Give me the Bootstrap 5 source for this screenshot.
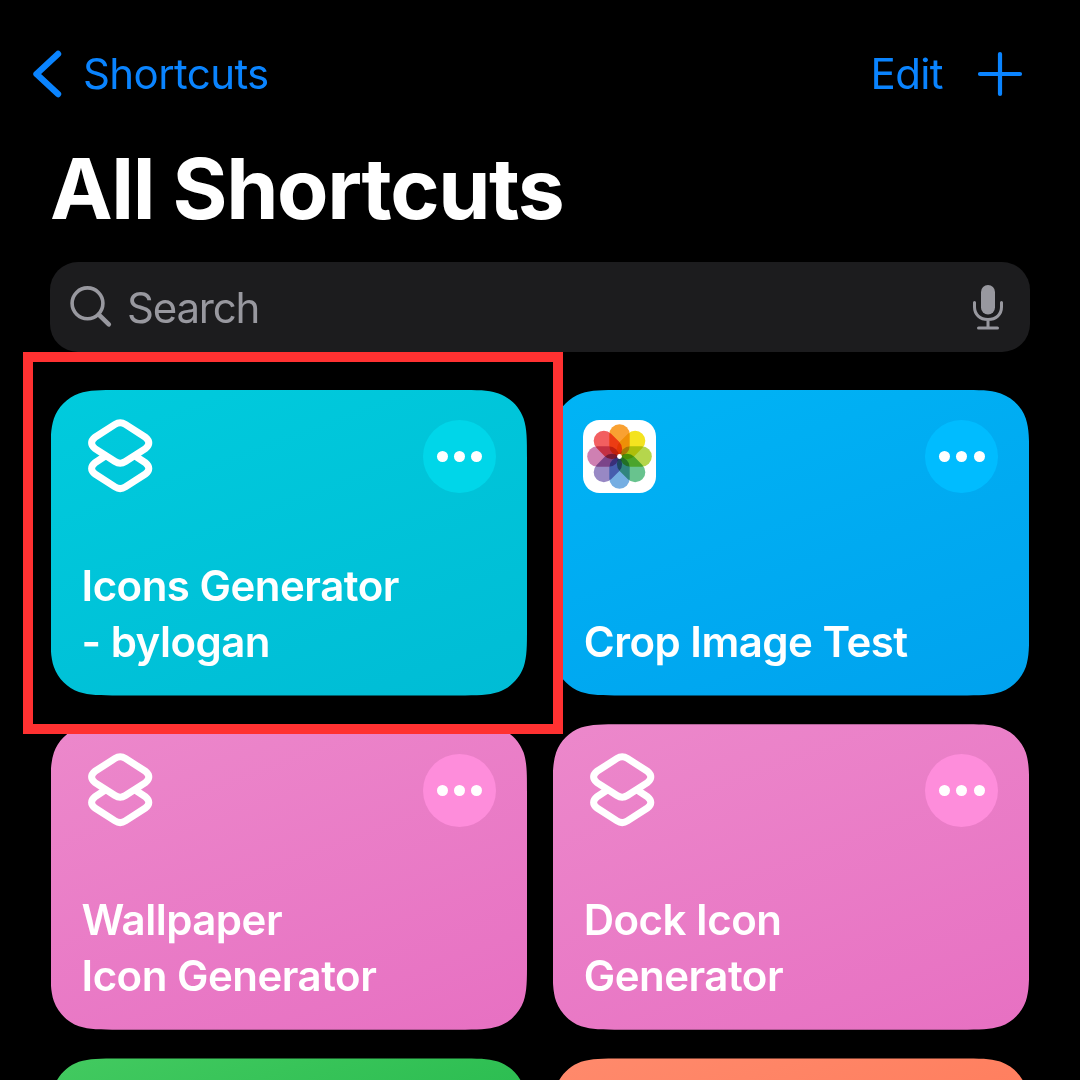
<!DOCTYPE html>
<html lang="en" data-bs-theme="dark">
<head>
<meta charset="utf-8">
<meta name="viewport" content="width=device-width, initial-scale=1">
<title>All Shortcuts</title>
<link href="https://cdn.jsdelivr.net/npm/bootstrap@5.3.0/dist/css/bootstrap.min.css" rel="stylesheet">
<style>
body{background:#000;color:#fff;font-family:Inter,"Liberation Sans",sans-serif}
.screen{width:1080px;height:1080px;padding:0 50px}
.topbar{height:147px;margin:0 -41px 0 -19px}
.topbar a{color:#0a84ff;font-size:42px;line-height:1}
.back-label{letter-spacing:-.6px;margin-left:20px}
.edit-label{letter-spacing:-.6px;margin-right:34px;padding-top:1px}
.page-title{font-size:84px;font-weight:700;line-height:84px;letter-spacing:-1.4px;height:115px}
.search-box{height:89.5px;border-radius:28px;background:#1c1c1e;color:#98989f;font-size:42px;padding:0 25px 0 20px;margin-bottom:38.5px}
.search-box .field{letter-spacing:-1.2px;margin-left:13px;padding-top:2px;line-height:50px}
.tiles{display:grid;grid-template-columns:476.5px 476.5px;gap:28.7px 25.7px;margin-left:.5px}
.tile{height:305.5px;padding:30px 31px 26.500px 31px;clip-path:path("M68.8 0H407.7C427.5 0 437.4 0 446.4 2.9L448.1 3.4C459.7 7.6 468.9 16.8 473.1 28.4C476.5 39.1 476.5 49 476.5 68.8V236.7C476.5 256.5 476.5 266.4 473.1 277.1C468.9 288.7 459.7 297.9 448.1 302.1C437.4 305.5 427.5 305.5 407.7 305.5H68.8C49 305.5 39.1 305.5 28.4 302.1C16.8 297.9 7.6 288.7 3.4 277.1C0 266.4 0 256.5 0 236.7V68.8C0 49 0 39.1 3.4 28.4C7.6 16.8 16.8 7.6 28.4 3.4C39.1 0 49 0 68.8 0Z")}
.tile-name{font-size:42px;font-weight:600;line-height:55.5px;letter-spacing:-.5px}
.teal{background:linear-gradient(160deg,#00cbdd,#00bcd5);--more:#00d6e9}
.azure{background:linear-gradient(160deg,#00b4f5,#00a2ee);--more:#00bcff}
.rose{background:linear-gradient(160deg,#ec88cb,#e770c2);--more:#fe8ddb}
.leaf{background:linear-gradient(160deg,#43ca60,#22b84b 60%);--more:#4fd86c}
.coral{background:linear-gradient(160deg,#ff8a6c,#ff6f4c);--more:#ff9c80}
.more{width:73px;height:73px;background:var(--more);gap:6.4px}
.more i{width:11px;height:11px;border-radius:50%;background:#fff}
.stack{margin:-5px 0 0 2.4px}
.photos{margin-left:-.9px}
.petals{isolation:isolate}
.petals rect{mix-blend-mode:multiply}
.highlight{left:23px;top:352px;width:539.5px;height:382px;border:10px solid #ff3131;z-index:5}
svg{display:block;flex:none}
</style>
</head>
<body>
<svg width="0" height="0" class="position-absolute" aria-hidden="true">
  <symbol id="stack" viewBox="0 0 72 80"><g fill="none" stroke="#fff" stroke-width="7" stroke-linejoin="round">
    <path d="M31 9.4Q36.2 6 41.4 9.4L61.4 22.3Q68.2 28 61.4 33.6L41.4 46.5Q36.2 50 31 46.5L11 33.6Q4.2 28 11 22.3Z"/>
    <path d="M22 40.500L11 47.700Q4.200 53.400 11 59L31 71.900Q36.200 75.400 41.400 71.900L61.400 59Q68.200 53.400 61.400 47.700L50.400 40.500"/></g></symbol>
</svg>
<main class="screen position-relative overflow-hidden">
  <header class="topbar d-flex align-items-center justify-content-between">
    <a href="#" class="d-flex align-items-center text-decoration-none">
      <svg width="32" height="50" viewBox="0 0 32 50"><path d="M27 5L5.500 25L27 45" fill="none" stroke="#0a84ff" stroke-width="6.400" stroke-linecap="round" stroke-linejoin="round"/></svg>
      <span class="back-label">Shortcuts</span>
    </a>
    <div class="d-flex align-items-center pe-5">
      <a href="#" class="edit-label text-decoration-none">Edit</a>
      <a href="#" aria-label="New shortcut"><svg width="46" height="46" viewBox="0 0 46 46"><path d="M3 23H43M23 3V43" stroke="#0a84ff" stroke-width="4.200" stroke-linecap="round"/></svg></a>
    </div>
  </header>
  <h1 class="page-title m-0">All Shortcuts</h1>
  <div class="search-box d-flex align-items-center">
    <svg width="44" height="44" viewBox="0 0 44 44" fill="none" stroke="#98989f" stroke-linecap="round"><circle cx="17.500" cy="18.300" r="15.400" stroke-width="3.600"/><path d="M28.800 29.600L38.800 39.300" stroke-width="4.600"/></svg>
    <span class="field flex-grow-1">Search</span>
    <svg width="34" height="48" viewBox="0 0 34 48" fill="none" stroke="#98989f" stroke-width="3" stroke-linecap="round"><rect x="10" y="2" width="14" height="29.500" rx="7" fill="#98989f" stroke="none"/><path d="M3.500 19.500V24C3.500 31.500 9 36.500 17 36.500S30.500 31.500 30.500 24V19.500M17 36.500V44M7.500 45H26.500"/></svg>
  </div>
  <section class="tiles">
    <article class="tile teal d-flex flex-column justify-content-between">
      <div class="d-flex justify-content-between"><svg class="stack" width="72" height="80"><use href="#stack"/></svg><div class="more rounded-circle d-flex align-items-center justify-content-center"><i></i><i></i><i></i></div></div>
      <div class="tile-name">Icons Generator<br>- bylogan</div>
    </article>
    <article class="tile azure d-flex flex-column justify-content-between">
      <div class="d-flex justify-content-between">
        <svg class="photos" width="73" height="73" viewBox="-36.500 -36.500 73 73"><rect x="-36.500" y="-36.500" width="73" height="73" rx="16.500" fill="#fff"/>
          <g class="petals">
            <rect x="-10.200" y="-32.300" width="20.400" height="31.800" rx="10.200" fill="#f9a132"/>
            <rect x="-10.200" y="-32.300" width="20.400" height="31.800" rx="10.200" fill="#f4e31f" transform="rotate(45)"/>
            <rect x="-10.200" y="-32.300" width="20.400" height="31.800" rx="10.200" fill="#b5d64c" transform="rotate(90)"/>
            <rect x="-10.200" y="-32.300" width="20.400" height="31.800" rx="10.200" fill="#68c38e" transform="rotate(135)"/>
            <rect x="-10.200" y="-32.300" width="20.400" height="31.800" rx="10.200" fill="#75aee2" transform="rotate(180)"/>
            <rect x="-10.200" y="-32.300" width="20.400" height="31.800" rx="10.200" fill="#9888c4" transform="rotate(225)"/>
            <rect x="-10.200" y="-32.300" width="20.400" height="31.800" rx="10.200" fill="#cf80b2" transform="rotate(270)"/>
            <rect x="-10.200" y="-32.300" width="20.400" height="31.800" rx="10.200" fill="#f25f60" transform="rotate(315)"/>
          </g><circle r="2.400" fill="#fff"/></svg>
        <div class="more rounded-circle d-flex align-items-center justify-content-center"><i></i><i></i><i></i></div></div>
      <div class="tile-name">Crop Image Test</div>
    </article>
    <article class="tile rose d-flex flex-column justify-content-between">
      <div class="d-flex justify-content-between"><svg class="stack" width="72" height="80"><use href="#stack"/></svg><div class="more rounded-circle d-flex align-items-center justify-content-center"><i></i><i></i><i></i></div></div>
      <div class="tile-name">Wallpaper<br>Icon Generator</div>
    </article>
    <article class="tile rose d-flex flex-column justify-content-between">
      <div class="d-flex justify-content-between"><svg class="stack" width="72" height="80"><use href="#stack"/></svg><div class="more rounded-circle d-flex align-items-center justify-content-center"><i></i><i></i><i></i></div></div>
      <div class="tile-name">Dock Icon<br>Generator</div>
    </article>
    <article class="tile leaf"></article>
    <article class="tile coral"></article>
  </section>
  <div class="highlight position-absolute"></div>
</main>
<script src="https://cdn.jsdelivr.net/npm/bootstrap@5.3.0/dist/js/bootstrap.bundle.min.js"></script>
</body>
</html>
